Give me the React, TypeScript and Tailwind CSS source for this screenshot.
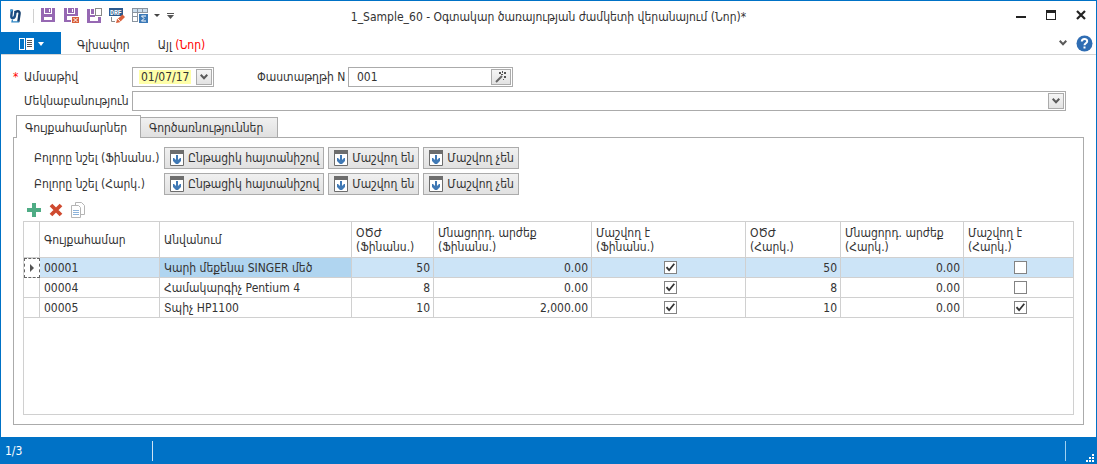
import React, { useState } from "react";

type Item = {
  code: string;
  name: string;
  finLife: string;
  finRest: string;
  finDepr: boolean;
  taxLife: string;
  taxRest: string;
  taxDepr: boolean;
};

const initialItems: Item[] = [
  { code: "00001", name: "Կարի մեքենա SINGER մեծ", finLife: "50", finRest: "0.00", finDepr: true, taxLife: "50", taxRest: "0.00", taxDepr: false },
  { code: "00004", name: "Համակարգիչ Pentium 4", finLife: "8", finRest: "0.00", finDepr: true, taxLife: "8", taxRest: "0.00", taxDepr: false },
  { code: "00005", name: "Տպիչ HP1100", finLife: "10", finRest: "2,000.00", finDepr: true, taxLife: "10", taxRest: "0.00", taxDepr: true },
];

const columns = [
  { title: "Գույքահամար" },
  { title: "Անվանում" },
  { title: "ՕԾԺ", sub: "(Ֆինանս.)" },
  { title: "Մնացորդ. արժեք", sub: "(Ֆինանս.)" },
  { title: "Մաշվող է", sub: "(Ֆինանս.)" },
  { title: "ՕԾԺ", sub: "(Հարկ.)" },
  { title: "Մնացորդ. արժեք", sub: "(Հարկ.)" },
  { title: "Մաշվող է", sub: "(Հարկ.)" },
];

const markRows = ["Բոլորը նշել (Ֆինանս.)", "Բոլորը նշել (Հարկ.)"];
const markActions = ["Ընթացիկ հայտանիշով", "Մաշվող են", "Մաշվող չեն"];

/* ─── Icons ─── */
function Logo() {
  return (
    <svg width="16" height="16" viewBox="0 0 16 16" fill="none">
      <path d="M4 1.500L3.300 8c-.2 1.600.4 2.200 1.500 2 1.300-.2 2-1.200 2.200-2.500L7.600 3" stroke="#1c4f87" strokeWidth="2.400" />
      <path d="M2 2.500h2.500" stroke="#3f9bd5" strokeWidth="2" />
      <path d="M7 4.500c1.500-1.800 5-1.700 4.600 1L10.300 14" stroke="#17406f" strokeWidth="2.400" />
      <path d="M4.500 11.500L4 13.800h7" stroke="#2f86c4" strokeWidth="1.300" />
    </svg>
  );
}

function SaveIcon() {
  return (
    <svg width="16" height="16" viewBox="0 0 16 16" shapeRendering="crispEdges">
      <path fill="#9668b3" d="M1 0h3v6h8V0h3v14H1zM5 0h6v5H5z" />
      <path fill="#fff" d="M9 1h1v3H9zM4 9h8v3H4z" />
    </svg>
  );
}

function SaveCloseIcon() {
  return (
    <svg width="16" height="16" viewBox="0 0 16 16" shapeRendering="crispEdges">
      <path fill="#9668b3" d="M1 0h3v6h8V0h3v8H4v4h4v2H1zM5 0h6v5H5z" />
      <path fill="#fff" d="M9 1h1v3H9z" />
      <path fill="#d9603b" d="M9 9h7v6H9z" />
      <path d="M10.500 10l4 4M14.500 10l-4 4" stroke="#fff" strokeWidth="1" shapeRendering="auto" />
    </svg>
  );
}

function SaveNewIcon() {
  return (
    <svg width="16" height="16" viewBox="0 0 16 16" shapeRendering="crispEdges">
      <path fill="#9668b3" d="M1 1h3v6h5v2H4v4h8V9h3v6H1zM5 1h3v5H5z" />
      <path fill="#fff" stroke="#888" d="M9.500.5h6v7h-6z" />
    </svg>
  );
}

function DrfIcon() {
  return (
    <svg width="16" height="16" viewBox="0 0 16 16">
      <path fill="#2d5a8e" d="M0 0h14v8H0z" />
      <text x="1" y="6.500" fontSize="6.500" fontWeight="bold" fill="#fff" fontFamily="Liberation Mono, monospace">DRF</text>
      <path d="M2.500 9v4.500H6" stroke="#888" fill="none" />
      <path fill="#d9603b" d="M7 15l1-3.500 5.500-5L16 9l-5.200 5.300z" />
      <path d="M9 11l2.500 2.800" stroke="#fff" />
    </svg>
  );
}

function SumTableIcon() {
  return (
    <svg width="16" height="16" viewBox="0 0 16 16" shapeRendering="crispEdges">
      <path fill="#8a949f" d="M0 0h16v14H0z" />
      <path fill="#c9dcec" d="M1 1h4v3H1zM6 1h4v3H6zM11 1h4v3h-4z" />
      <path fill="#fff" d="M1 5h4v3H1zM6 5h4v3H6zM11 5h4v3h-4zM1 9h4v4H1z" />
      <path fill="#fff" d="M6 5h10v10H6z" />
      <path fill="#3b79b7" d="M7 6h9v9H7z" />
      <path d="M14 8H9.500l2.500 2.500L9.500 13H14" stroke="#fff" fill="none" shapeRendering="auto" />
    </svg>
  );
}

function Chevron() {
  return (
    <svg width="8" height="6" viewBox="0 0 8 6" fill="none">
      <path d="M.7.8L4 4.200 7.300.8" stroke="#5a5a5a" strokeWidth="2.100" />
    </svg>
  );
}

function WandIcon() {
  return (
    <svg width="12" height="12" viewBox="0 0 12 12">
      <path d="M1 11l6-6" stroke="#666" strokeWidth="2" />
      <path fill="#555" d="M4 1h2v2H4zM7 0h1v2H7zM9 1h2v2H9zM9 5h2v2H9zM8 8h1v1H8zM6 3h2v1H6z" />
    </svg>
  );
}

function MarkIcon() {
  return (
    <svg width="14" height="16" viewBox="0 0 14 16">
      <path fill="#fff" stroke="#6d6d6d" d="M.5.5h13v15H.5z" />
      <path fill="#6d6d6d" d="M0 0h14v4H0z" />
      <path fill="#4079b5" d="M6 5h2v5l2-2h1v3l-3 3H6l-3-3V8h1l2 2z" />
    </svg>
  );
}

function DropButton({ label, children }: { label: string; children: React.ReactNode }) {
  return (
    <button
      type="button"
      aria-label={label}
      className="m-px flex shrink-0 items-center justify-center border border-[#ababab] bg-linear-to-b from-[#f5f5f5] to-[#e3e3e3]"
    >
      {children}
    </button>
  );
}

function GridCheck({ checked, label, onChange }: { checked: boolean; label: string; onChange: () => void }) {
  return (
    <span className="grid place-items-center pl-1">
      <input
        type="checkbox"
        aria-label={label}
        checked={checked}
        onChange={onChange}
        className="peer col-start-1 row-start-1 size-[13px] appearance-none border border-[#838383] bg-white"
      />
      <svg
        width="11"
        height="11"
        viewBox="0 0 11 11"
        fill="none"
        className="pointer-events-none invisible col-start-1 row-start-1 peer-checked:visible"
      >
        <path d="M1.500 5.200l2.600 3 5.200-6.400" stroke="#333" strokeWidth="1.800" />
      </svg>
    </span>
  );
}

/* ─── Window chrome ─── */
function TitleBar() {
  return (
    <div className="relative flex h-[31px] items-center justify-between">
      <div className="flex items-center pb-[2px] pl-[7px]">
        <Logo />
        <span className="ml-[9px] mr-[6px] h-[14px] w-px bg-[#d0d0d0]" />
        <div className="flex items-center gap-[7px]">
          <button type="button" aria-label="Պահպանել"><SaveIcon /></button>
          <button type="button" aria-label="Պահպանել և փակել"><SaveCloseIcon /></button>
          <button type="button" aria-label="Պահպանել և ստեղծել նոր"><SaveNewIcon /></button>
          <button type="button" aria-label="Սևագիր"><DrfIcon /></button>
          <button type="button" aria-label="Ամփոփում" className="flex items-center gap-[6px]">
            <SumTableIcon />
            <svg width="6" height="4" viewBox="0 0 6 4"><path fill="#444" d="M0 0h6L3 3z" /></svg>
          </button>
          <button type="button" aria-label="Կարգավորել">
            <svg width="7" height="6" viewBox="0 0 7 6"><path fill="#555" d="M0 0h7v1H0zM0 2h7L3.500 6z" /></svg>
          </button>
        </div>
      </div>
      <h1 className="absolute left-1/2 -translate-x-1/2 whitespace-nowrap">
        1_Sample_60 - Օգտակար ծառայության ժամկետի վերանայում (Նոր)*
      </h1>
      <div className="flex pb-[2px]">
        <button type="button" aria-label="Ծալել" className="flex w-[30px] justify-center">
          <svg width="11" height="11" viewBox="0 0 11 11"><path fill="#222" d="M0 6h10v2H0z" /></svg>
        </button>
        <button type="button" aria-label="Ծավալել" className="flex w-[30px] justify-center">
          <svg width="11" height="11" viewBox="0 0 11 11"><path fill="#222" fillRule="evenodd" d="M0 0h10v10H0zM1 3v6h8V3z" /></svg>
        </button>
        <button type="button" aria-label="Փակել" className="flex w-[30px] justify-center">
          <svg width="11" height="11" viewBox="0 0 11 11"><path d="M1 1l8 8M9 1L1 9" stroke="#222" strokeWidth="2.200" /></svg>
        </button>
      </div>
    </div>
  );
}

function Ribbon() {
  return (
    <div className="flex h-[23px] items-stretch border-b border-[#d5d5d5]">
      <button type="button" aria-label="Ֆայլ" className="flex w-[60px] items-center justify-center gap-1 bg-[#0072c6] pt-[2px]">
        <svg width="15" height="12" viewBox="0 0 15 12" shapeRendering="crispEdges">
          <path fill="#fff" d="M0 0h15v12H0z" />
          <path fill="#0072c6" d="M1 1h4v10H1zM6 0h1v12H6z" />
          <path fill="#555" d="M8 2h5v1H8zM8 4h5v1H8zM8 6h5v1H8zM8 8h5v1H8z" />
        </svg>
        <svg width="6" height="4" viewBox="0 0 6 4"><path fill="#fff" d="M0 0h6L3 4z" /></svg>
      </button>
      <button type="button" className="ml-4 pt-1">Գլխավոր</button>
      <button type="button" className="ml-7 pt-1">
        Այլ <span className="text-[#ff0000]">(Նոր)</span>
      </button>
      <button type="button" aria-label="Ծալել ժապավենը" className="ml-auto flex items-center"><Chevron /></button>
      <button type="button" aria-label="Օգնություն" className="ml-[9px] mr-[3px] flex items-center">
        <svg width="17" height="17" viewBox="0 0 17 17">
          <circle cx="8.500" cy="8.500" r="8" fill="#2f6db3" />
          <path d="M5.800 6.500C5.800 3.200 11.200 3.200 11.200 6.300c0 2-2.700 2-2.700 4M8.500 11.500v2" stroke="#fff" strokeWidth="2" fill="none" />
        </svg>
      </button>
    </div>
  );
}

const num = "border-r border-b border-[#d0d0d0] px-[3px] text-right";
const txt = "border-r border-b border-[#d0d0d0] px-1 text-left";

export default function App() {
  const [items, setItems] = useState(initialItems);

  const toggle = (index: number, key: "finDepr" | "taxDepr") =>
    setItems(items.map((item, i) => (i === index ? { ...item, [key]: !item[key] } : item)));

  return (
    <div className="flex min-h-screen flex-col border-x border-t border-[#0072c6] bg-white font-['DejaVu_Sans_Condensed','DejaVu_Sans',sans-serif] text-[12px] leading-[14px] text-[#333]">
      <TitleBar />
      <Ribbon />

      {/* ─── Form ─── */}
      <form className="flex flex-col gap-1 px-3 pt-3">
        <div className="flex h-5 items-center">
          <label htmlFor="date" className="flex w-[119px] shrink-0">
            <span className="w-[11px] text-[#ff0000]">*</span>
            Ամսաթիվ
          </label>
          <div className="flex h-5 w-[82px] border border-[#ababab]">
            <input id="date" defaultValue="01/07/17" className="my-[2px] ml-[6px] w-[52px] bg-[#ffffa8] px-[2px] outline-none" />
            <span className="ml-auto flex w-[18px] *:flex-1"><DropButton label="Ընտրել ամսաթիվ"><Chevron /></DropButton></span>
          </div>
          <label htmlFor="doc" className="ml-[43px] w-[91px] shrink-0 whitespace-nowrap">Փաստաթղթի N</label>
          <div className="flex h-5 w-[165px] border border-[#ababab]">
            <input id="doc" defaultValue="001" className="min-w-0 flex-1 px-2 outline-none" />
            <span className="flex w-[22px] *:flex-1"><DropButton label="Գեներացնել"><WandIcon /></DropButton></span>
          </div>
        </div>
        <div className="flex h-5 items-center pr-[18px]">
          <label htmlFor="comment" className="w-[119px] shrink-0 whitespace-nowrap pl-[11px]">Մեկնաբանություն</label>
          <div className="flex h-5 flex-1 border border-[#ababab]">
            <input id="comment" className="min-w-0 flex-1 px-2 outline-none" />
            <span className="flex w-[18px] *:flex-1"><DropButton label="Ընտրել"><Chevron /></DropButton></span>
          </div>
        </div>
      </form>

      {/* ─── Tabs ─── */}
      <div role="tablist" className="mt-1 flex items-end px-[15px]">
        <button type="button" role="tab" aria-selected="true" className="relative z-10 -mb-px h-[23px] w-[125px] whitespace-nowrap border border-b-0 border-[#ababab] bg-white px-2 pt-[2px] text-left">
          Գույքահամարներ
        </button>
        <button type="button" role="tab" aria-selected="false" className="h-5 w-[137px] whitespace-nowrap border border-b-0 border-l-0 border-[#ababab] bg-linear-to-b from-[#f0f0f0] to-[#e0e0e0] px-2 text-left">
          Գործառնություններ
        </button>
      </div>

      <div className="mx-3 mb-3 flex flex-1 flex-col border border-[#ababab] px-[9px] pb-[9px] pt-[9px]">
        <div className="flex flex-col gap-1">
          {markRows.map((row) => (
            <div key={row} className="flex items-center">
              <span className="w-[141px] shrink-0 whitespace-nowrap pl-[11px]">{row}</span>
              <div className="flex gap-1">
                {markActions.map((action) => (
                  <button
                    key={action}
                    type="button"
                    className="flex h-[22px] items-center gap-1 whitespace-nowrap border border-[#ababab] bg-linear-to-b from-[#f0f0f0] to-[#e1e1e1] pl-[5px] pr-1"
                  >
                    <MarkIcon />
                    {action}
                  </button>
                ))}
              </div>
            </div>
          ))}
        </div>

        <div className="flex h-[26px] items-center gap-2 px-1 pt-1">
          <button type="button" aria-label="Ավելացնել">
            <svg width="14" height="14" viewBox="0 0 14 14"><path fill="#4fac85" d="M5 0h4v5h5v4H9v5H5V9H0V5h5z" /></svg>
          </button>
          <button type="button" aria-label="Հեռացնել">
            <svg width="14" height="14" viewBox="0 0 14 14"><path d="M2 2l10 10M12 2L2 12" stroke="#cf4a2f" strokeWidth="3.800" /></svg>
          </button>
          <button type="button" aria-label="Պատճենել">
            <svg width="15" height="16" viewBox="0 0 15 16" fill="#fff" stroke="#b5b5b5">
              <path d="M4.500.5h6l3 3v9h-9z" />
              <path d="M.5 3.500h7l2 2v10h-9z" />
              <path d="M2 8.500h6M2 10.500h6M2 12.500h6" stroke="#8db3da" />
            </svg>
          </button>
        </div>

        {/* ─── Grid ─── */}
        <div className="flex-1 border border-[#d0d0d0]">
          <table className="w-full table-fixed border-separate border-spacing-0">
            <colgroup>
              <col className="w-[16px]" />
              <col className="w-[120px]" />
              <col className="w-[192px]" />
              <col className="w-[82px]" />
              <col className="w-[158px]" />
              <col className="w-[154px]" />
              <col className="w-[95px]" />
              <col className="w-[123px]" />
              <col className="w-[109px]" />
            </colgroup>
            <thead>
              <tr className="h-9">
                <td className="border-r border-b border-[#d0d0d0]" />
                {columns.map((col, i) => (
                  <th key={i} className="border-r border-b border-[#d0d0d0] px-1 text-left font-normal last:border-r-0">
                    {col.title}
                    {col.sub && <div>{col.sub}</div>}
                  </th>
                ))}
              </tr>
            </thead>
            <tbody>
              {items.map((item, i) => (
                <tr key={item.code} className="h-5 first:bg-[#cce4f7]">
                  <td className={i === 0 ? "border border-dashed border-[#666] bg-white" : "border-r border-b border-[#d0d0d0]"}>
                    {i === 0 && (
                      <svg width="4" height="8" viewBox="0 0 4 8" className="mx-auto"><path fill="#555" d="M0 0l4 4-4 4z" /></svg>
                    )}
                  </td>
                  <td className={txt}>{item.code}</td>
                  <td className={i === 0 ? `${txt} bg-[#b0d5f0]` : txt}>{item.name}</td>
                  <td className={num}>{item.finLife}</td>
                  <td className={num}>{item.finRest}</td>
                  <td className="border-r border-b border-[#d0d0d0]">
                    <GridCheck checked={item.finDepr} label={`Մաշվող է (Ֆինանս.) ${item.code}`} onChange={() => toggle(i, "finDepr")} />
                  </td>
                  <td className={num}>{item.taxLife}</td>
                  <td className={num}>{item.taxRest}</td>
                  <td className="border-b border-[#d0d0d0]">
                    <GridCheck checked={item.taxDepr} label={`Մաշվող է (Հարկ.) ${item.code}`} onChange={() => toggle(i, "taxDepr")} />
                  </td>
                </tr>
              ))}
            </tbody>
          </table>
        </div>
      </div>

      {/* ─── Status bar ─── */}
      <footer className="flex h-[27px] items-center bg-[#0072c6] pl-1 text-white">
        <span className="w-[147px]">1/3</span>
        <span className="h-5 w-px bg-[#cfe3f4]" />
        <span className="ml-auto mr-5 h-5 w-px bg-[#9fd0f0]" />
        <svg width="8" height="8" viewBox="0 0 8 8" fill="#fff" className="mb-[2px] mr-[2px] self-end">
          <path d="M6 0h2v2H6zM3 3h2v2H3zM6 3h2v2H6zM0 6h2v2H0zM3 6h2v2H3zM6 6h2v2H6z" />
        </svg>
      </footer>
    </div>
  );
}
